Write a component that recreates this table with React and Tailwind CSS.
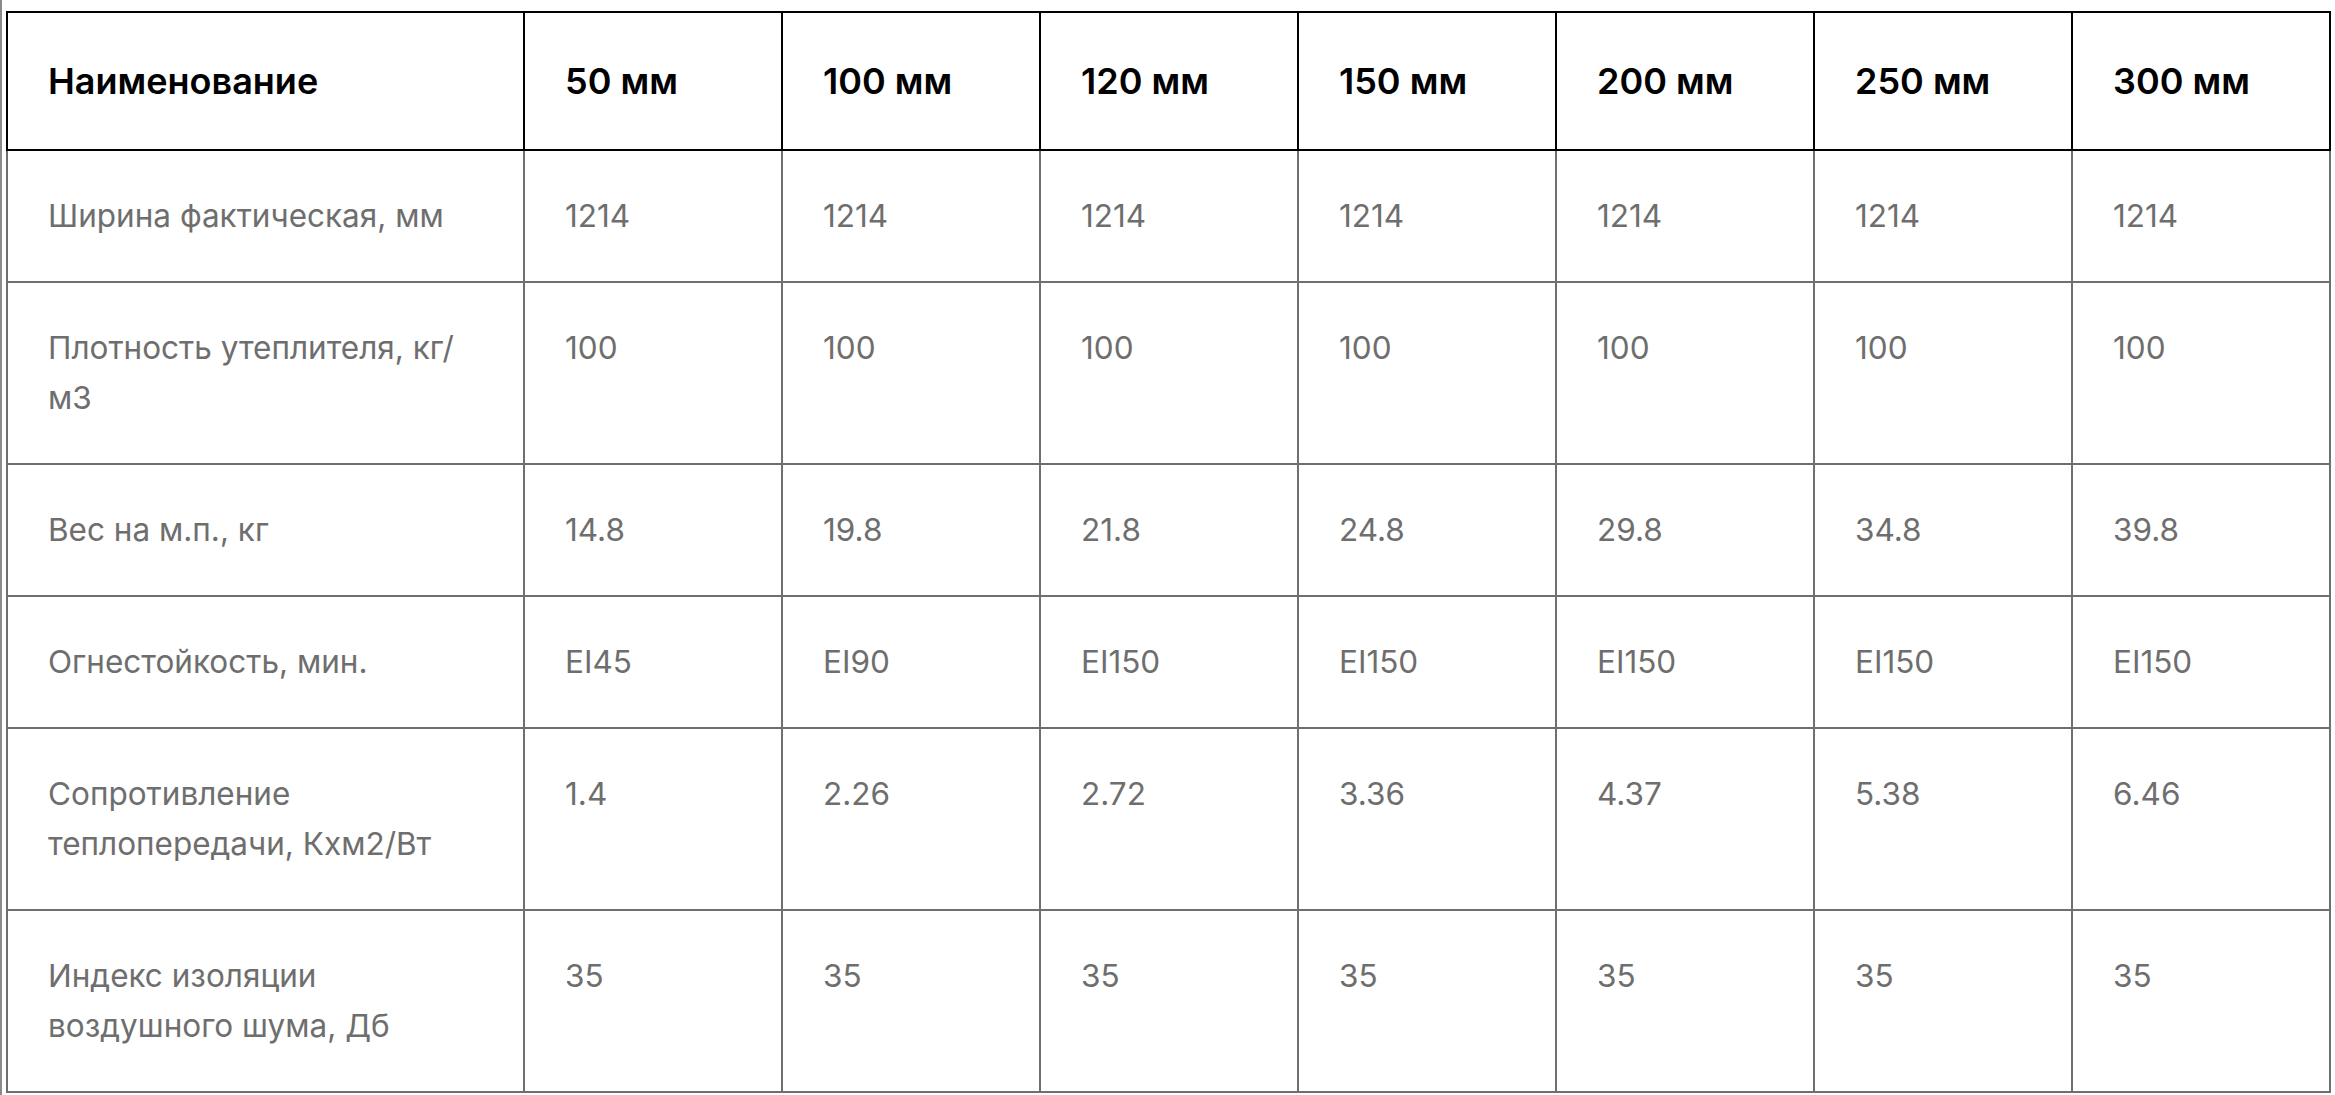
import React from "react";

const headers = ["Наименование", "50 мм", "100 мм", "120 мм", "150 мм", "200 мм", "250 мм", "300 мм"];

const rows = [
  ["Ширина фактическая, мм", "1214", "1214", "1214", "1214", "1214", "1214", "1214"],
  ["Плотность утеплителя, кг/ м3", "100", "100", "100", "100", "100", "100", "100"],
  ["Вес на м.п., кг", "14.8", "19.8", "21.8", "24.8", "29.8", "34.8", "39.8"],
  ["Огнестойкость, мин.", "EI45", "EI90", "EI150", "EI150", "EI150", "EI150", "EI150"],
  ["Сопротивление теплопередачи, Кхм2/Вт", "1.4", "2.26", "2.72", "3.36", "4.37", "5.38", "6.46"],
  ["Индекс изоляции воздушного шума, Дб", "35", "35", "35", "35", "35", "35", "35"],
];

export default function App() {
  return (
    <div
      className="min-h-[1095px] w-[2335px] bg-white border-l-2 border-[#8a8a8a] pl-[4px] pt-[11px]"
      style={{ fontFamily: "Inter, 'Noto Sans', sans-serif" }}
    >
      <table className="w-[2325px] table-fixed border-collapse">
        <colgroup>
          <col className="w-[517px]" />
          {headers.slice(1).map((h) => (
            <col key={h} className="w-[258px]" />
          ))}
        </colgroup>
        <thead>
          <tr>
            {headers.map((h) => (
              <th
                key={h}
                className="border-2 border-black px-10 py-10 text-left align-top text-[36px] leading-[56px] font-semibold text-black"
              >
                {h}
              </th>
            ))}
          </tr>
        </thead>
        <tbody>
          {rows.map((r, i) => (
            <tr key={i}>
              {r.map((c, j) => (
                <td
                  key={j}
                  className={
                    j === 0
                      ? "border-2 border-[#6f6f6f] px-10 py-10 pr-12 text-left align-top text-[31.5px] leading-[50px] font-normal text-[#6e6e6e]"
                      : "border-2 border-[#6f6f6f] px-10 py-10 text-left align-top text-[31.5px] leading-[50px] font-normal text-[#6e6e6e]"
                  }
                >
                  {c}
                </td>
              ))}
            </tr>
          ))}
        </tbody>
      </table>
    </div>
  );
}
